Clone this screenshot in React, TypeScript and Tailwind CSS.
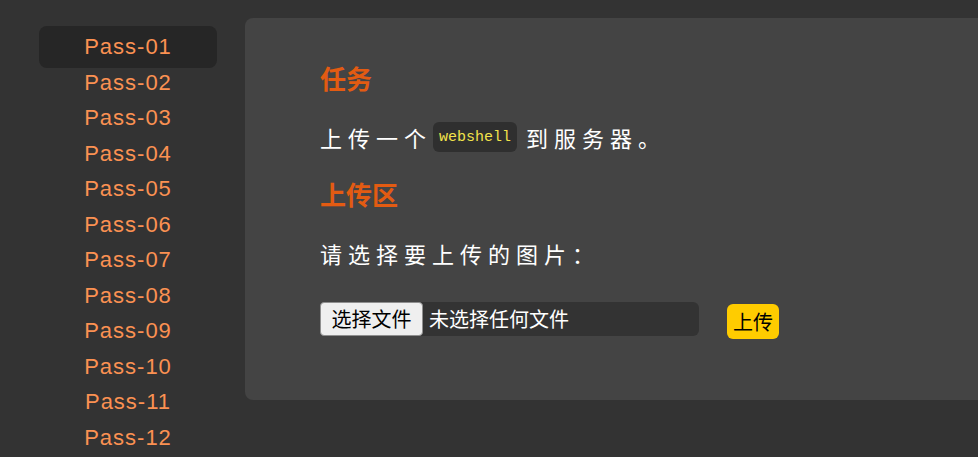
import { useState } from 'react';

const PASSES = Array.from({ length: 12 }, (_, i) => `Pass-${String(i + 1).padStart(2, '0')}`);

const cjk = "font-['Noto_Sans_CJK_SC','Microsoft_YaHei',sans-serif]";

export default function App() {
  const [active, setActive] = useState('Pass-01');

  return (
    <div className="flex min-h-screen w-full overflow-hidden bg-[#333333]">
      {/* sidebar */}
      <div className="ml-[39px] flex w-[178px] shrink-0 flex-col pt-[29px]">
        {PASSES.map((p) => (
          <button
            key={p}
            onClick={() => setActive(p)}
            className={`flex h-[35.5px] items-center justify-center rounded-lg font-['Liberation_Sans',Arial,sans-serif] text-[22px] tracking-[1px] text-[#fb9152] ${active === p ? '-my-[3px] h-[41.5px] bg-[#262626]' : ''}`}
          >
            {p}
          </button>
        ))}
      </div>

      {/* main panel */}
      <div className="ml-[28px] mt-[18px] h-[382px] w-[760px] shrink-0 rounded-lg bg-[#444444] pl-[75px] pt-[42px]">
        <h2 className={`${cjk} text-[26px] font-bold leading-[36px] text-[#e35b12]`}>任务</h2>

        <p className={`${cjk} mt-[26px] flex items-center text-[22px] leading-[30px] tracking-[6px] text-white`}>
          <span>上传一个</span>
          <code className="ml-[1px] mr-[9px] inline-flex h-[30px] items-center rounded-md bg-[#2f2f2f] px-[6px] pt-[2px] font-['Liberation_Mono',monospace] text-[15px] tracking-normal text-[#f2e24b]">
            webshell
          </code>
          <span>到服务器。</span>
        </p>

        <h2 className={`${cjk} mt-[24px] text-[26px] font-bold leading-[36px] text-[#e35b12]`}>上传区</h2>

        <p className={`${cjk} mt-[26px] text-[22px] leading-[30px] tracking-[6px] text-white`}>
          请选择要上传的图片：
        </p>

        <div className="mt-[34px] flex items-start">
          <div className={`${cjk} flex h-[34px] w-[379px] items-center rounded-md bg-[#333333]`}>
            <span className="flex h-full w-[103px] items-center justify-center rounded-[4px] border border-[#8f8f8f] bg-[#efefef] text-[20px] text-black">
              选择文件
            </span>
            <span className="ml-[6px] text-[20px] text-white">未选择任何文件</span>
          </div>
          <button
            className={`${cjk} ml-[28px] mt-[2px] flex h-[35px] w-[52px] items-center justify-center rounded-md bg-[#ffcc00] text-[20px] text-black`}
          >
            上传
          </button>
        </div>
      </div>
    </div>
  );
}
